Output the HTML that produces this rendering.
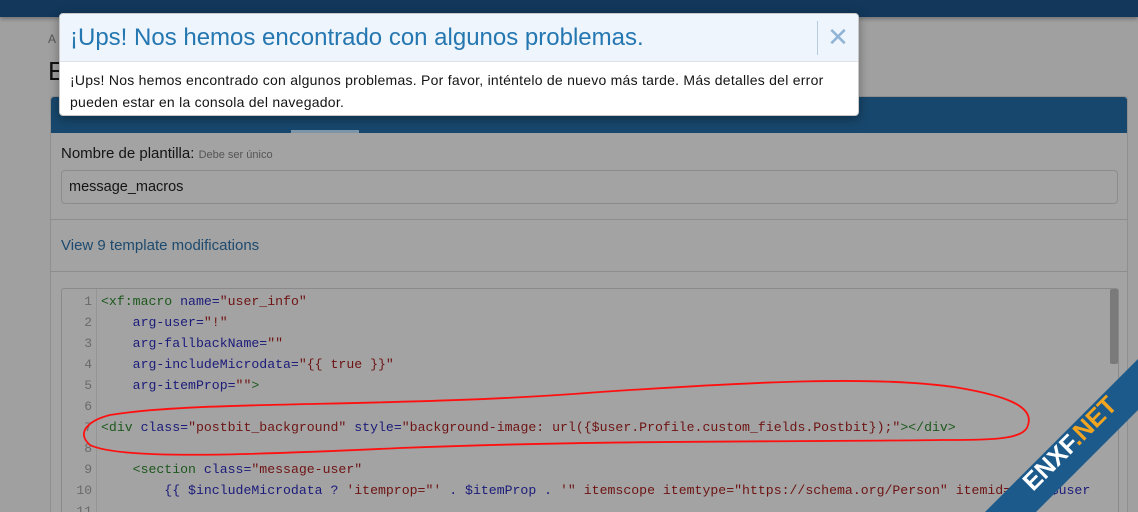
<!DOCTYPE html>
<html><head><meta charset="utf-8"><style>
*{margin:0;padding:0;box-sizing:border-box}
html{width:1138px;height:512px;overflow:hidden}
body{width:1138px;height:512px;overflow:hidden;background:#a0a0a0;font-family:"Liberation Sans",sans-serif;position:relative}
.top{position:absolute;left:0;top:0;width:1138px;height:17px;background:#12375a;box-shadow:0 2px 4px rgba(0,0,0,.3)}
.crumb{position:absolute;left:48px;top:32px;font-size:12px;color:#555}
.h1{position:absolute;left:48px;top:56px;font-size:26px;color:#111}
.panel{position:absolute;left:50px;top:96px;width:1078px;height:416px;background:#a3a3a3;border:1px solid #8f8f8f;border-bottom:none;border-radius:3px 3px 0 0;overflow:hidden}
.tabs{height:36px;background:#17476c;border-radius:3px 3px 0 0;position:relative}
.tabs .ul{position:absolute;left:240px;bottom:0;width:68px;height:3px;background:#7e95a8}
.lbl{position:absolute;left:10px;top:48px;font-size:15px;color:#141414}
.lbl small{font-size:11px;color:#555}
.inp{position:absolute;left:10px;top:73px;width:1057px;height:34px;border:1px solid #8c8c8c;border-radius:4px;padding:8px 7px;font-size:14.5px;color:#141414}
.sep{position:absolute;left:0;width:1076px;height:1px;background:#8d8d8d}
.link{position:absolute;left:10px;top:140px;font-size:15px;color:#1d4a6e}
.code{position:absolute;left:10px;top:191px;width:1058px;height:240px;border:1px solid #8a8a8a;border-radius:3px}
.gut{position:absolute;left:0;top:0;width:35px;height:240px;border-right:1px solid #959595}
.ln{position:absolute;width:30px;text-align:right;font:13px "Liberation Mono",monospace;color:#6a6a6a}
.cl{position:absolute;left:39px;white-space:pre;font:13.2px "Liberation Mono",monospace;color:#1b1b7a}
.g{color:#1d581d}.r{color:#6e1313}
.sb{position:absolute;right:0;top:0;width:8px;height:75px;background:#7a7a7a;border-radius:2px}
.modal{position:absolute;left:59px;top:13px;width:800px;height:103px;background:#fff;border:1px solid #c8c8c8;border-radius:4px;box-shadow:0 3px 10px rgba(0,0,0,.35);overflow:hidden}
.mh{height:48px;background:#eef5fc;border-bottom:1px solid #dfe3e8;position:relative}
.mh .t{position:absolute;left:10px;top:10px;font-size:24px;color:#2577b1}
.mh .x{position:absolute;right:0;top:7px;width:41px;height:34px;border-left:1px solid #b5cbe0;color:#8fb4d6;font-size:26px;text-align:center;line-height:32px}
.mb{padding:7px 10px;font-size:14px;line-height:22px;color:#141414;letter-spacing:0.25px}
.rib{position:absolute;width:0;height:0;left:0;top:0}
</style></head><body>
<div class="top"></div>
<div class="crumb">A</div>
<div class="h1">E</div>
<div class="panel">
<div class="tabs"><div class="ul"></div></div>
<div class="lbl">Nombre de plantilla: <small>Debe ser único</small></div>
<div class="inp">message_macros</div>
<div class="sep" style="top:122px"></div>
<div class="link">View 9 template modifications</div>
<div class="sep" style="top:174px"></div>
<div class="code">
<div class="gut"></div>
<div class="ln" style="top:5px">1</div><div class="ln" style="top:26px">2</div><div class="ln" style="top:47px">3</div><div class="ln" style="top:68px">4</div><div class="ln" style="top:89px">5</div><div class="ln" style="top:110px">6</div><div class="ln" style="top:131px">7</div><div class="ln" style="top:152px">8</div><div class="ln" style="top:173px">9</div><div class="ln" style="top:194px">10</div><div class="ln" style="top:215px">11</div>
<div class="cl" style="top:5px"><span class="g">&lt;xf:macro</span> name=<span class="r">"user_info"</span></div>
<div class="cl" style="top:26px">    arg-user=<span class="r">"!"</span></div>
<div class="cl" style="top:47px">    arg-fallbackName=<span class="r">""</span></div>
<div class="cl" style="top:68px">    arg-includeMicrodata=<span class="r">"{{ true }}"</span></div>
<div class="cl" style="top:89px">    arg-itemProp=<span class="r">""</span><span class="g">&gt;</span></div>
<div class="cl" style="top:131px"><span class="g">&lt;div</span> class=<span class="r">"postbit_background"</span> style=<span class="r">"background-image: url({$user.Profile.custom_fields.Postbit});"</span><span class="g">&gt;&lt;/div&gt;</span></div>
<div class="cl" style="top:173px">    <span class="g">&lt;section</span> class=<span class="r">"message-user"</span></div>
<div class="cl" style="top:194px">        {{ $includeMicrodata ? <span class="r">'itemprop="'</span> . $itemProp . <span class="r">'" itemscope itemtype="https://schema.org/Person" itemid='</span> . ($user</div>
<div class="sb"></div>
</div>
</div>
<svg style="position:absolute;left:0;top:0" width="1138" height="512"><path d="M110 415 C200 400,400 408,600 392 C750 382,880 375,960 388 C1000 395,1035 405,1028 425 C1025 440,990 440,940 440 C800 442,600 440,400 448 C250 455,120 460,90 445 C75 432,90 420,110 415" fill="none" stroke="#ff1010" stroke-width="1.8"/>
<polygon points="985,512 1138,359 1138,410 1036,512" fill="#1c5a8c"/>
<text x="0" y="0" transform="translate(1033,492) rotate(-45)" fill="#fff" font-family="Liberation Sans" font-weight="bold" font-size="25">ENXF<tspan fill="#f2a521">.NET</tspan></text>
</svg>
<div class="modal">
<div class="mh"><div class="t">¡Ups! Nos hemos encontrado con algunos problemas.</div><div class="x">✕</div></div>
<div class="mb">¡Ups! Nos hemos encontrado con algunos problemas. Por favor, inténtelo de nuevo más tarde. Más detalles del error pueden estar en la consola del navegador.</div>
</div>
</body></html>
